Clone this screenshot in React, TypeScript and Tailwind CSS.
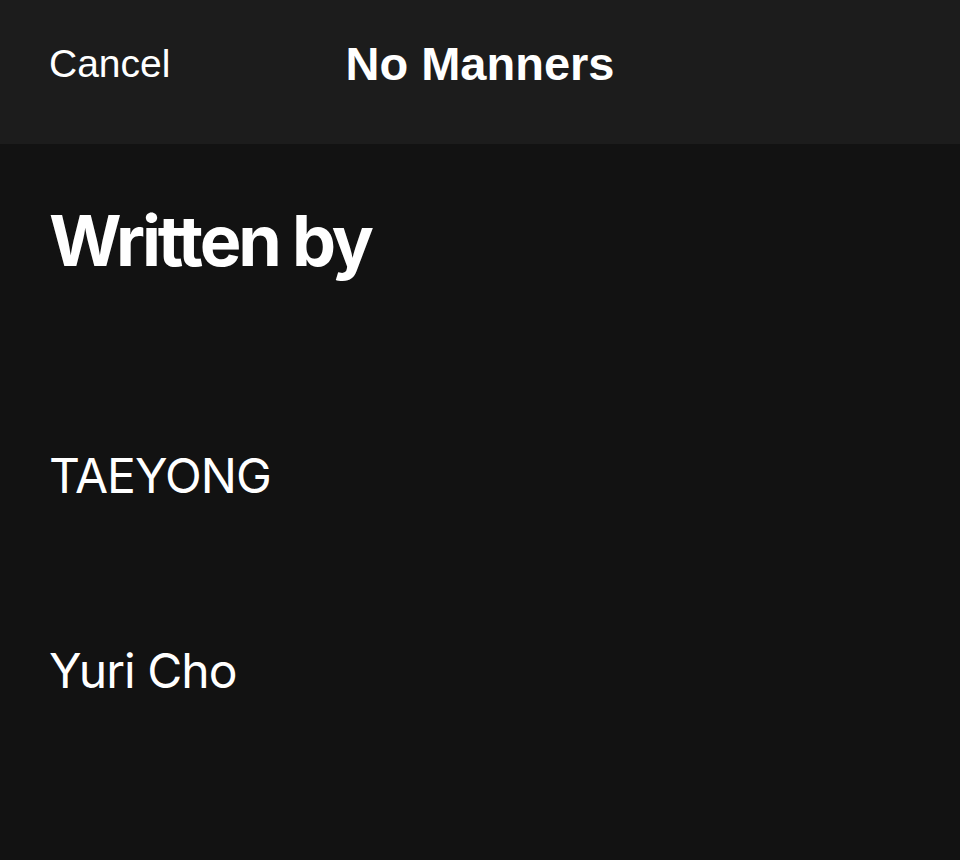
export default function App() {
  const writers = ['TAEYONG', 'Yuri Cho'];

  return (
    <div className="w-[960px] h-[860px] bg-[#121212] text-white overflow-hidden">
      <div className="h-[144px] bg-[#1c1c1c] grid grid-cols-[1fr_auto_1fr] items-center px-[49px] pb-[17px]">
        <span className="text-[39px] font-['Liberation_Sans',Arial,sans-serif] leading-none">Cancel</span>
        <h1 className="text-[47px] font-bold font-['Liberation_Sans',Arial,sans-serif] leading-none">No Manners</h1>
        <span />
      </div>

      <div className="px-[49px] font-['Inter',sans-serif]">
        <h2 className="pt-[62px] text-[70px] font-bold tracking-[-0.045em] leading-none">Written by</h2>
        <ul className="mt-[176px] flex flex-col gap-[147px]">
          {writers.map((name) => (
            <li key={name} className="text-[48px] leading-none tracking-[-0.02em]">
              {name}
            </li>
          ))}
        </ul>
      </div>
    </div>
  );
}
